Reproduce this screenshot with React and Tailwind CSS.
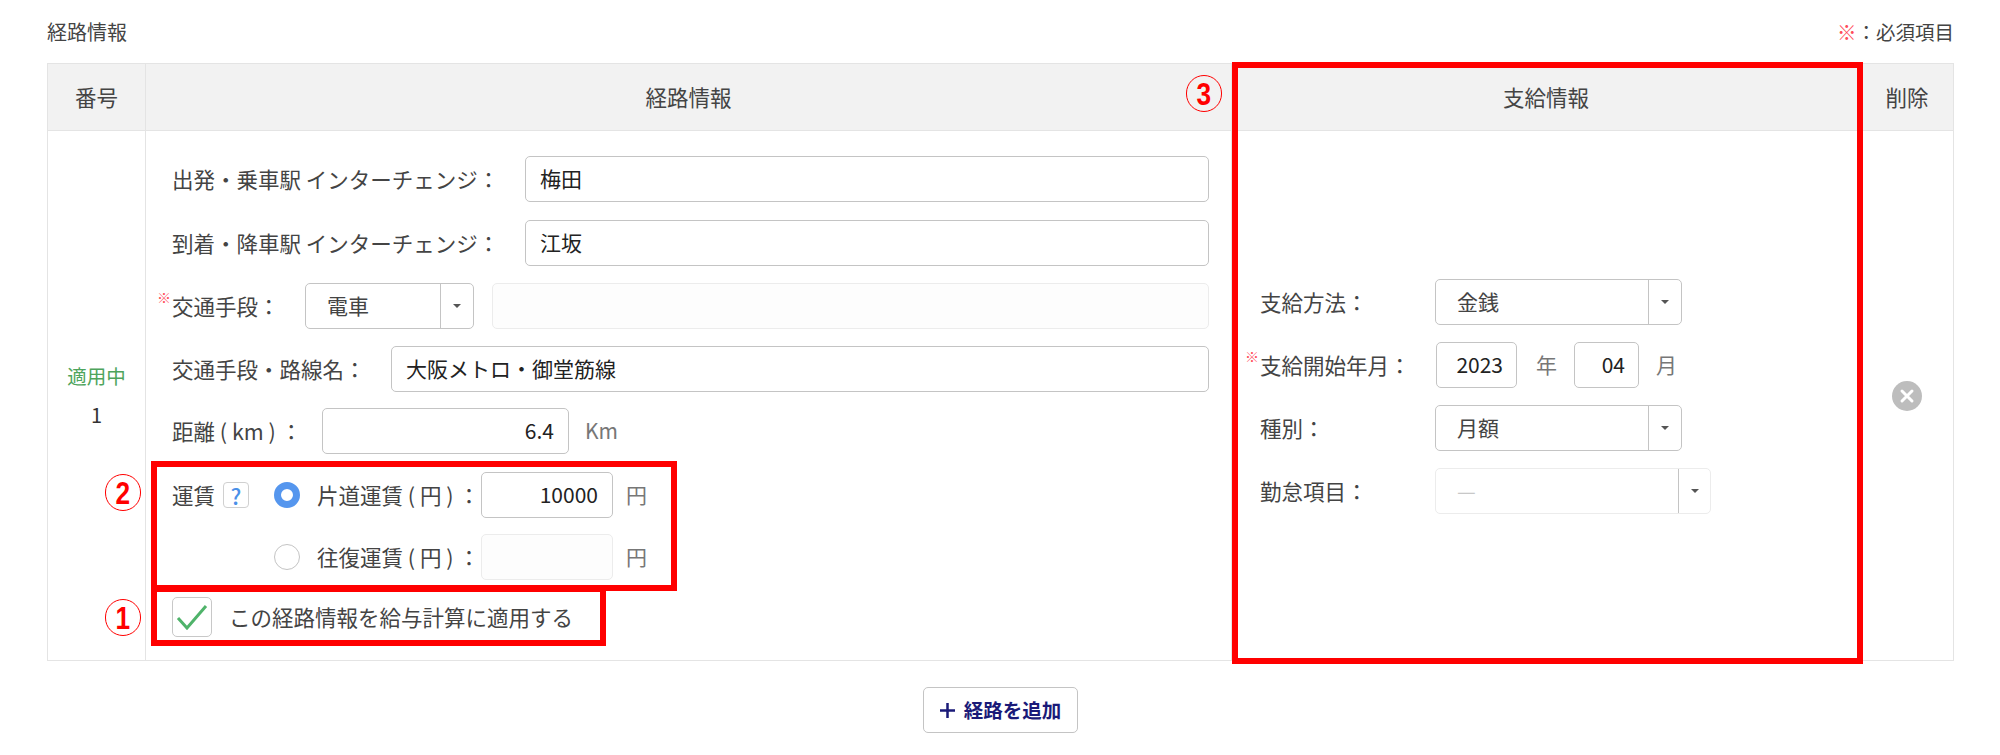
const F = "font-['Noto_Sans_CJK_JP',sans-serif]";

function Caret() {
  return <span className="w-0 h-0 border-l-[4px] border-r-[4px] border-t-[4px] border-l-transparent border-r-transparent border-t-[#555]" />;
}

function Input({ value = "", w, right, disabled, grow, pad = "px-[14px]" }) {
  return (
    <div
      className={`h-[46px] rounded-[5px] border flex items-center text-[21px] text-[#222] ${pad} ${right ? "justify-end" : ""} ${grow ? "flex-1" : ""} ${disabled ? "border-[#ececec] bg-[#fdfdfd]" : "border-[#c4c4c4] bg-white"} ${w || ""}`}
    >
      {value}
    </div>
  );
}

function Select({ value, w, split, disabled }) {
  return (
    <div className={`h-[46px] rounded-[5px] border flex items-stretch ${disabled ? "border-[#ececec]" : "border-[#c4c4c4]"} ${w}`}>
      <div className={`flex-1 flex items-center pl-[21px] text-[21px] ${disabled ? "text-[#c8c8c8]" : "text-[#444]"}`}>{value}</div>
      <div className={`${split} border-l border-[#c4c4c4] flex items-center justify-center`}>
        <Caret />
      </div>
    </div>
  );
}

function Req() {
  return <span className="absolute left-[-15px] top-[-1px] text-[14px] leading-[16px] text-[#ff4d5a]">※</span>;
}

function Row({ label, req, lw, children, className = "" }) {
  return (
    <div className={`flex items-center h-[46px] ${className}`}>
      <div className={`relative shrink-0 text-[21.5px] text-[#444] whitespace-nowrap ${lw}`}>
        {req && <Req />}
        {label}
      </div>
      {children}
    </div>
  );
}

function Radio({ on }) {
  return on ? (
    <span className="w-[26px] h-[26px] rounded-full border-[7px] border-[#5596ee] bg-white shrink-0" />
  ) : (
    <span className="w-[26px] h-[26px] rounded-full border border-[#c4c4c4] bg-white shrink-0" />
  );
}

function Mark({ children, className }) {
  return (
    <span className={`absolute w-[36px] h-[37px] rounded-full border-[1.5px] border-[#ff0000] flex items-center justify-center font-['Liberation_Sans',sans-serif] font-bold text-[32px] leading-none text-[#ff0000] ${className}`}>
      <span className="inline-block scale-x-[0.82]">{children}</span>
    </span>
  );
}

export default function App() {
  return (
    <div className={`relative w-[2000px] h-[755px] bg-white ${F} pl-[47px] pr-[46px] pt-[19px] text-[#444]`}>
      <div className="flex justify-between items-center h-[26px] text-[#444]">
        <span className="text-[20px] leading-[26px]">経路情報</span>
        <span className="text-[19.5px] leading-[26px]">
          <span className="text-[#ff4d5a]">※</span>：必須項目
        </span>
      </div>

      <div className="mt-[18px] border border-[#e4e4e4] h-[598px] flex flex-col">
        <div className="grid grid-cols-[98px_1086px_1fr_92px] h-[67px] bg-[#f2f2f2] border-b border-[#e4e4e4] text-[21.5px] text-center">
          <div className="flex items-center justify-center border-r border-[#e4e4e4]">番号</div>
          <div className="flex items-center justify-center border-r border-[#e4e4e4]">経路情報</div>
          <div className="flex items-center justify-center border-r border-[#e4e4e4]">支給情報</div>
          <div className="flex items-center justify-center">削除</div>
        </div>

        <div className="grid grid-cols-[98px_1086px_1fr_92px] flex-1">
          <div className="flex flex-col items-center justify-center border-r border-[#e4e4e4]">
            <div className="text-[19.5px] leading-[26px] text-[#4ea45c]">適用中</div>
            <div className="mt-[13px] text-[20px] leading-[26px] text-[#333]">1</div>
          </div>

          <div className="border-r border-[#e4e4e4] pl-[26px] pr-[22px] pt-[25px]">
            <Row label="出発・乗車駅 インターチェンジ：" lw="w-[353px]">
              <Input value="梅田" grow />
            </Row>
            <Row label="到着・降車駅 インターチェンジ：" lw="w-[353px]" className="mt-[18px]">
              <Input value="江坂" grow />
            </Row>
            <Row label="交通手段：" req lw="w-[133px]" className="mt-[17px]">
              <Select value="電車" w="w-[169px]" split="w-[33px]" />
              <div className="w-[18px]" />
              <Input disabled grow />
            </Row>
            <Row label="交通手段・路線名：" lw="w-[219px]" className="mt-[17px]">
              <Input value="大阪メトロ・御堂筋線" grow />
            </Row>
            <Row label="距離 ( km ) ：" lw="w-[150px]" className="mt-[16px]">
              <Input value="6.4" right w="w-[247px]" />
              <span className="ml-[16px] text-[21px] text-[#777]">Km</span>
            </Row>
            <div className="flex items-center h-[46px] mt-[18px]">
              <span className="text-[21.5px] w-[51px] shrink-0">運賃</span>
              <span className="w-[26px] h-[26px] rounded-[4px] border border-[#d0d0d0] flex items-center justify-center text-[22px] leading-none font-medium text-[#4a90e8] shrink-0">?</span>
              <span className="w-[25px]" />
              <Radio on />
              <span className="ml-[17px] w-[164px] shrink-0 text-[21.5px] whitespace-nowrap">片道運賃 ( 円 ) ：</span>
              <Input value="10000" right w="w-[132px]" />
              <span className="ml-[13px] text-[21px] text-[#777]">円</span>
            </div>
            <div className="flex items-center h-[46px] mt-[16px] pl-[102px]">
              <Radio />
              <span className="ml-[17px] w-[164px] shrink-0 text-[21.5px] whitespace-nowrap">往復運賃 ( 円 ) ：</span>
              <Input disabled w="w-[132px]" />
              <span className="ml-[13px] text-[21px] text-[#777]">円</span>
            </div>
            <div className="flex items-center mt-[17px]">
              <span className="w-[40px] h-[40px] rounded-[5px] border border-[#c8c8c8] flex items-center justify-center shrink-0">
                <svg width="32" height="26" viewBox="0 0 32 26" fill="none">
                  <path d="M2 14 L11 24 L30 2" stroke="#4fb36a" strokeWidth="3" />
                </svg>
              </span>
              <span className="ml-[17px] text-[21.5px] whitespace-nowrap">この経路情報を給与計算に適用する</span>
            </div>
          </div>

          <div className="border-r border-[#e4e4e4] pl-[28px] pt-[148px]">
            <Row label="支給方法：" lw="w-[175px]">
              <Select value="金銭" w="w-[247px]" split="w-[33px]" />
            </Row>
            <Row label="支給開始年月：" req lw="w-[176px]" className="mt-[17px]">
              <Input value="2023" right w="w-[81px]" pad="px-[13px]" />
              <span className="ml-[19px] w-[38px] text-[21px] text-[#777]">年</span>
              <Input value="04" right w="w-[65px]" pad="px-[13px]" />
              <span className="ml-[17px] text-[21px] text-[#777]">月</span>
            </Row>
            <Row label="種別：" lw="w-[175px]" className="mt-[17px]">
              <Select value="月額" w="w-[247px]" split="w-[33px]" />
            </Row>
            <Row label="勤怠項目：" lw="w-[175px]" className="mt-[17px]">
              <Select value="—" w="w-[276px]" split="w-[32px]" disabled />
            </Row>
          </div>

          <div className="flex items-center justify-center">
            <svg width="30" height="30" viewBox="0 0 30 30">
              <circle cx="15" cy="15" r="15" fill="#bdbdbd" />
              <path d="M10 10 L20 20 M20 10 L10 20" stroke="#fff" strokeWidth="3" strokeLinecap="round" />
            </svg>
          </div>
        </div>
      </div>

      <div className="flex justify-center mt-[26px]">
        <div className="w-[155px] h-[46px] rounded-[5px] border border-[#c4c4c4] bg-white flex items-center justify-center gap-[9px] text-[19.5px] font-semibold text-[#1a1a78]">
          <svg width="15" height="15" viewBox="0 0 15 15">
            <path d="M7.5 0 V15 M0 7.5 H15" stroke="#1a1a78" strokeWidth="2.5" />
          </svg>
          経路を追加
        </div>
      </div>

      <div className="absolute left-[151px] top-[461px] w-[526px] h-[130px] border-[6px] border-[#ff0000]" />
      <div className="absolute left-[151px] top-[586px] w-[455px] h-[60px] border-[6px] border-[#ff0000]" />
      <div className="absolute left-[1232px] top-[62px] w-[631px] h-[602px] border-[6px] border-[#ff0000]" />
      <Mark className="left-[105px] top-[474px]">2</Mark>
      <Mark className="left-[105px] top-[599px]">1</Mark>
      <Mark className="left-[1186px] top-[75px]">3</Mark>
    </div>
  );
}
